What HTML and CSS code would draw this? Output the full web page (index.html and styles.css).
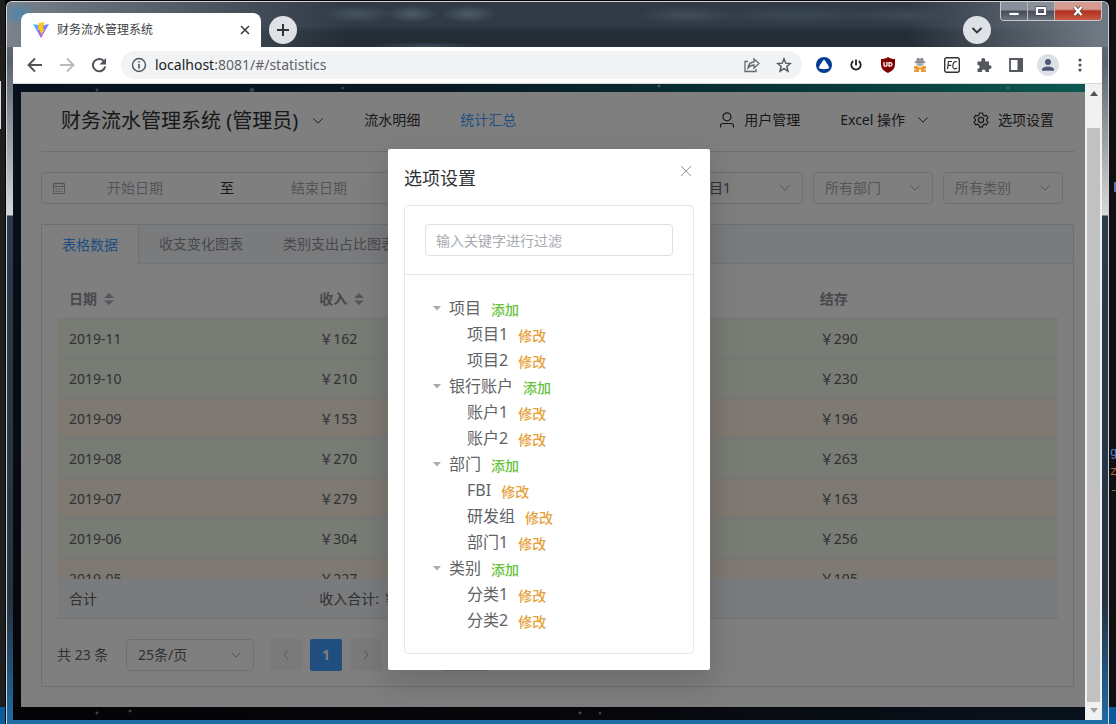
FILE: index.html
```html
<!DOCTYPE html>
<html lang="zh-CN">
<head>
<meta charset="utf-8">
<title>财务流水管理系统</title>
<link rel="stylesheet" href="styles.css">
</head>
<body>
<svg class="defs" aria-hidden="true">
  <symbol id="down" viewBox="0 0 12 12"><path d="M1.500 3.500 6 8.200l4.500-4.700" fill="none" stroke="currentColor"/></symbol>
  <symbol id="left" viewBox="0 0 12 12"><path d="M8 1.800 4 6l4 4.200" fill="none" stroke="currentColor"/></symbol>
  <symbol id="right" viewBox="0 0 12 12"><path d="M4 1.800 8 6l-4 4.200" fill="none" stroke="currentColor"/></symbol>
  <symbol id="sort" viewBox="0 0 10 12"><path d="M0 5 5 0l5 5zM0 7.500h10l-5 4.500z" fill="#a8abb2"/></symbol>
  <symbol id="caret" viewBox="0 0 12 12"><path d="M2 4h8L6 8.500z" fill="#a8abb2"/></symbol>
</svg>
<aside class="desk desk-left" aria-hidden="true"><i></i></aside>
<div class="window">
  <header class="titlebar">
    <div class="tab">
      <svg width="16" height="16" viewBox="0 0 16 16"><defs><linearGradient id="v" x2=".7" y2="1"><stop stop-color="#41c8ff"/><stop offset="1" stop-color="#bd34fe"/></linearGradient></defs><path d="M0 2 8 16 16 2 8.500 3.500z" fill="url(#v)"/><path d="M11.500 0 5.500 1.200 5 8l2.300-.4-.6 3.200 1.600-.4-.8 3.900 4.500-7.300-2.200.3z" fill="#ffc61c"/></svg>
      <span>财务流水管理系统</span>
      <button class="plain" aria-label="关闭标签页"><svg width="10" height="10" viewBox="0 0 10 10"><path d="m1 1 8 8M9 1 1 9" stroke="#3c4043" stroke-width="1.600"/></svg></button>
    </div>
    <button class="circle" aria-label="新标签页"><svg width="14" height="14" viewBox="0 0 14 14"><path d="M7 1v12M1 7h12" stroke="#303236" stroke-width="2"/></svg></button>
    <button class="circle more" aria-label="搜索标签页"><svg width="12" height="12" viewBox="0 0 12 12"><path d="m1.500 4 4.500 4.500L10.500 4" fill="none" stroke="#303236" stroke-width="1.800"/></svg></button>
    <div class="caption">
      <button aria-label="最小化"><svg width="12" height="12" viewBox="0 0 12 12"><path d="M1 7.500h10v3H1z" fill="#fff" stroke="#445" stroke-width=".7"/></svg></button>
      <button aria-label="最大化"><svg width="12" height="12" viewBox="0 0 12 12"><path d="M2 3h8v6H2z" fill="none" stroke="#445" stroke-width="3.400"/><path d="M2 3h8v6H2z" fill="none" stroke="#fff" stroke-width="2.200"/></svg></button>
      <button class="close" aria-label="关闭"><svg width="12" height="12" viewBox="0 0 12 12"><path d="m2.500 2 7 8m0-8-7 8" stroke="#544" stroke-width="4"/><path d="m2.500 2 7 8m0-8-7 8" stroke="#fff" stroke-width="2.500"/></svg></button>
    </div>
  </header>
  <main class="client">
    <nav class="toolbar">
      <button class="tool" aria-label="后退"><svg width="16" height="16" viewBox="0 0 16 16"><path d="M15 8H2M8 1.500 1.500 8 8 14.500" fill="none" stroke="#50545a" stroke-width="1.900"/></svg></button>
      <button class="tool" aria-label="前进"><svg width="16" height="16" viewBox="0 0 16 16"><path d="M1 8h13M8 1.500 14.500 8 8 14.500" fill="none" stroke="#b8babd" stroke-width="1.900"/></svg></button>
      <button class="tool" aria-label="刷新"><svg width="16" height="16" viewBox="0 0 16 16"><path d="M13.200 4.500A6.200 6.200 0 1 0 14.200 9.500" fill="none" stroke="#50545a" stroke-width="2"/><path d="M15 1v6.500H8.500z" fill="#50545a"/></svg></button>
      <div class="address">
        <svg width="16" height="16" viewBox="0 0 16 16"><circle cx="8" cy="8" r="6.500" fill="none" stroke="#50545a" stroke-width="1.400"/><path d="M8 7v4.500M8 4.200v1.600" stroke="#50545a" stroke-width="1.600"/></svg>
        <span class="url"><b>localhost</b>:8081/#/statistics</span>
        <button class="tool" aria-label="分享"><svg width="18" height="16" viewBox="0 0 18 16"><path d="M5 4.500H2v10h11V12" fill="none" stroke="#666a70" stroke-width="1.300"/><path d="M5 11c.4-4 2.500-5.800 6-6V2l5 4.500L11 11V8C8.500 8 6.500 9 5 11z" fill="none" stroke="#666a70" stroke-width="1.300"/></svg></button>
        <button class="tool" aria-label="收藏"><svg width="16" height="16" viewBox="0 0 16 16"><path d="m8 1.800 1.700 4.400 4.700.3-3.600 3 1.200 4.600L8 11.600l-4 2.500 1.200-4.600-3.600-3 4.700-.3z" fill="none" stroke="#50545a" stroke-width="1.400"/></svg></button>
      </div>
      <button class="tool" aria-label="扩展一"><svg width="16" height="16" viewBox="0 0 16 16"><circle cx="8" cy="8" r="8" fill="#023b94"/><path d="M8 2.500C9.500 4 12.500 8.500 13.300 11c-3 1.600-7.600 1.600-10.600 0C3.500 8.500 6.500 4 8 2.500z" fill="#fff"/></svg></button>
      <button class="tool" aria-label="扩展二"><svg width="14" height="14" viewBox="0 0 14 14"><path d="M4.300 3a4.700 4.700 0 1 0 5.400 0M7 1.500v6" fill="none" stroke="#202124" stroke-width="1.800"/></svg></button>
      <button class="tool" aria-label="扩展三"><svg width="16" height="16" viewBox="0 0 16 16"><path d="M8 0c2 1.500 4 2 7 2v5c0 5-3 7-7 9-4-2-7-4-7-9V2c3 0 5-.5 7-2z" fill="#800000"/><path d="M4 5v3.200q0 1 1.300 1h.4q1.300 0 1.300-1V5M9 5.700v3.400h1.500q1.500 0 1.500-1.500T10.500 5.700z" fill="none" stroke="#fff" stroke-width="1.300"/></svg></button>
      <button class="tool" aria-label="扩展四"><svg width="16" height="16" viewBox="0 0 16 16"><path d="M5 1h2l1 .7L9 1h2l1 3.500h1.500V6h-11V4.500H4z" fill="#8d9094"/><path d="M4.500 6h7v2L8 9.500 4.500 8z" fill="#a8aaad"/><path d="M2 9h3.500L8 11l2.500-2H14v3l-2 .5 2 1V15H9v-2.500H7V15H2v-1.500l2-1L2 12z" fill="#ed9b32"/></svg></button>
      <button class="tool" aria-label="扩展五"><svg width="18" height="18" viewBox="0 0 18 18"><rect x="1.700" y="1.700" width="14.600" height="14.600" rx="2" fill="#fff" stroke="#333" stroke-width="1.400"/><path d="M4.500 13 5.500 5.500H9M5 9.300h3.200M13.800 6C11.500 4.500 9.800 7 9.800 10s2 3.700 4.200 2" fill="none" stroke="#333" stroke-width="1.200"/></svg></button>
      <button class="tool" aria-label="扩展程序"><svg width="16" height="16" viewBox="0 0 16 16"><path d="M1.500 4.500h3.800V3a2 2 0 0 1 4 0v1.500H13v3.700h.7a1.900 1.900 0 0 1 0 3.800H13V15H9.500v-.8a1.800 1.800 0 0 0-3.600 0v.8H1.500v-3.300h.7a1.900 1.900 0 0 0 0-3.700h-.7z" fill="#55595f"/></svg></button>
      <button class="tool" aria-label="侧边栏"><svg width="14" height="14" viewBox="0 0 14 14"><path d="M1 1h12v12H1z" fill="#fff" stroke="#55595f" stroke-width="1.800"/><path d="M8.500 0H14v14H8.500z" fill="#55595f"/></svg></button>
      <button class="tool" aria-label="用户"><svg width="22" height="22" viewBox="0 0 22 22"><circle cx="11" cy="11" r="11" fill="#dee1e6"/><circle cx="11" cy="8" r="3" fill="#4d5778"/><path d="M5 16.800V15q1-2.600 6-2.600t6 2.600v1.800z" fill="#4d5778"/></svg></button>
      <button class="tool" aria-label="菜单"><svg width="4" height="14" viewBox="0 0 4 14"><circle cx="2" cy="2" r="1.600" fill="#50545a"/><circle cx="2" cy="7" r="1.600" fill="#50545a"/><circle cx="2" cy="12" r="1.600" fill="#50545a"/></svg></button>
    </nav>
    <div class="browser-body">
      <div class="viewport">
        <div class="page">
          <header class="menu">
            <a href="#" class="brand">财务流水管理系统 (管理员) <svg width="12" height="12"><use href="#down"/></svg></a>
            <a href="#">流水明细</a>
            <a href="#" class="active">统计汇总</a>
            <a href="#" class="push"><svg width="16" height="16" viewBox="0 0 16 16"><circle cx="8" cy="4.800" r="4" fill="none" stroke="currentColor" stroke-width="1.200"/><path d="M1.500 15.500v-1.500q0-2.500 2.500-2.500h8q2.500 0 2.500 2.500v1.500" fill="none" stroke="currentColor" stroke-width="1.200"/></svg>用户管理</a>
            <a href="#" class="excel">Excel 操作<svg width="12" height="12"><use href="#down"/></svg></a>
            <a href="#"><svg width="16" height="16" viewBox="0 0 16 16"><path d="M6.500 1h3l.6 2.100 1.300.8 2.100-.6 1.500 2.600L13.500 7.400v1.300l1.500 1.500-1.500 2.600-2.100-.6-1.300.8-.6 2.100h-3L5.900 13l-1.300-.8-2.100.6L1 10.200l1.500-1.500V7.400L1 5.900l1.500-2.600 2.100.6 1.300-.8z" fill="none" stroke="currentColor" stroke-width="1.200" stroke-linejoin="round"/><circle cx="8" cy="8" r="2.600" fill="none" stroke="currentColor" stroke-width="1.200"/></svg>选项设置</a>
          </header>
          <form class="filters">
            <div class="range field">
              <svg width="14" height="14" viewBox="0 0 14 14"><path d="M1.500 2.500h11v10h-11zM1.500 5.500h11M4 1v3M10 1v3" fill="none" stroke="#a8abb2"/><path d="M3.500 8h7M3.500 10.500h7" stroke="#a8abb2" stroke-dasharray="2 1"/></svg>
              <input aria-label="开始日期" placeholder="开始日期"><span>至</span><input aria-label="结束日期" placeholder="结束日期">
            </div>
            <div class="field select chosen"><select aria-label="项目"><option>项目1</option></select><svg width="12" height="12"><use href="#down"/></svg></div>
            <div class="field select"><select aria-label="部门"><option>所有部门</option></select><svg width="12" height="12"><use href="#down"/></svg></div>
            <div class="field select"><select aria-label="类别"><option>所有类别</option></select><svg width="12" height="12"><use href="#down"/></svg></div>
          </form>
          <section class="card">
            <div class="tabs"><button class="on">表格数据</button><button>收支变化图表</button><button>类别支出占比图表</button></div>
            <div class="pane">
              <div class="scroller">
                <table>
                  <thead><tr><th>日期 <svg width="10" height="12"><use href="#sort"/></svg></th><th>收入 <svg width="10" height="12"><use href="#sort"/></svg></th><th></th><th>结存</th></tr></thead>
                  <tbody>
                    <tr><td>2019-11</td><td>￥162</td><td></td><td>￥290</td></tr>
                    <tr><td>2019-10</td><td>￥210</td><td></td><td>￥230</td></tr>
                    <tr class="warn"><td>2019-09</td><td>￥153</td><td></td><td>￥196</td></tr>
                    <tr><td>2019-08</td><td>￥270</td><td></td><td>￥263</td></tr>
                    <tr class="warn"><td>2019-07</td><td>￥279</td><td></td><td>￥163</td></tr>
                    <tr><td>2019-06</td><td>￥304</td><td></td><td>￥256</td></tr>
                    <tr class="warn"><td>2019-05</td><td>￥227</td><td></td><td>￥105</td></tr>
                  </tbody>
                </table>
              </div>
              <table class="total"><tbody><tr><td>合计</td><td>收入合计: ￥</td><td></td><td></td></tr></tbody></table>
              <div class="pager">
                <span>共 23 条</span>
                <div class="field select size"><select aria-label="每页条数"><option>25条/页</option></select><svg width="12" height="12"><use href="#down"/></svg></div>
                <div class="pages">
                  <button aria-label="上一页"><svg width="12" height="12"><use href="#left"/></svg></button>
                  <button class="current">1</button>
                  <button aria-label="下一页"><svg width="12" height="12"><use href="#right"/></svg></button>
                </div>
                <input class="field jump" aria-label="页码">
              </div>
            </div>
          </section>
        </div>
        <div class="overlay">
          <section class="dialog" role="dialog" aria-labelledby="dialog-title">
            <header><h2 id="dialog-title">选项设置</h2><button class="plain" aria-label="关闭"><svg width="12" height="12" viewBox="0 0 12 12"><path d="m1 1 10 10M11 1 1 11" stroke="#909399"/></svg></button></header>
            <div class="box">
              <div class="search"><input class="field" aria-label="过滤" placeholder="输入关键字进行过滤"></div>
              <ul class="tree">
                <li><div><svg width="12" height="12"><use href="#caret"/></svg>项目<a href="#" class="add">添加</a></div>
                  <ul><li><div>项目1<a href="#">修改</a></div></li><li><div>项目2<a href="#">修改</a></div></li></ul></li>
                <li><div><svg width="12" height="12"><use href="#caret"/></svg>银行账户<a href="#" class="add">添加</a></div>
                  <ul><li><div>账户1<a href="#">修改</a></div></li><li><div>账户2<a href="#">修改</a></div></li></ul></li>
                <li><div><svg width="12" height="12"><use href="#caret"/></svg>部门<a href="#" class="add">添加</a></div>
                  <ul><li><div>FBI<a href="#">修改</a></div></li><li><div>研发组<a href="#">修改</a></div></li><li><div>部门1<a href="#">修改</a></div></li></ul></li>
                <li><div><svg width="12" height="12"><use href="#caret"/></svg>类别<a href="#" class="add">添加</a></div>
                  <ul><li><div>分类1<a href="#">修改</a></div></li><li><div>分类2<a href="#">修改</a></div></li></ul></li>
              </ul>
            </div>
          </section>
        </div>
      </div>
      <div class="scrollbar" aria-hidden="true"><svg width="8" height="5" viewBox="0 0 8 5"><path d="M0 5 4 0l4 5z" fill="#505050"/></svg><i></i><svg width="8" height="5" viewBox="0 0 8 5"><path d="M0 0h8L4 5z" fill="#a3a3a3"/></svg></div>
    </div>
  </main>
</div>
<aside class="desk desk-right" aria-hidden="true"><i></i><span>g</span><span class="warm">z</span><span class="warm">-</span></aside>
</body>
</html>
```
FILE: styles.css
```css
* { box-sizing: border-box; }
body {
  margin: 0; height: 100vh; display: flex; overflow: hidden; background: #050508;
  font: 14px/20px "Noto Sans", "Noto Sans CJK SC", sans-serif; color: #606266;
}
button, input, select { font: inherit; color: inherit; border: 0; padding: 0; margin: 0; background: none; }
svg { flex: none; display: block; }
a { color: inherit; text-decoration: none; }
.defs { position: absolute; width: 0; height: 0; }
.plain { display: flex; }

.desk { background: linear-gradient(#1f1f20, #1f1f20) 0 0 / 100% calc(100% - 17px) no-repeat #0a5c9c; }
.desk-left { width: 5px; padding-top: 81px; }
.desk-left i { display: block; width: 1px; height: 48px; background: #ddd; }
.desk-right { width: 7px; padding: 182px 0 0 1px; overflow: hidden; background-image: linear-gradient(#101012, #101012); font: 12px/19px "Liberation Mono", monospace; }
.desk-right i { display: block; width: 2px; height: 10px; margin: 0 0 252px 4px; background: #5a70b8; }
.desk-right span { display: block; color: #5a86c8; }
.desk-right .warm { color: #a86c3c; }

.window {
  flex: 1; min-width: 0; display: flex; flex-direction: column; margin: 1px 0 0 1px; padding: 0 6px 4px;
  border: solid #cfd3da; border-width: 1px 1px 0; border-radius: 6px 6px 0 0;
  background:
    linear-gradient(#1e6ba5, #1e6ba5) bottom / 100% 4px no-repeat,
    linear-gradient(#6b737e, #59636e 60px, #8c9298 120px, #d8d8d8 213px, #2b3a49 214px, #26323f 600px, #1e6ba5 720px);
}
.titlebar {
  display: flex; align-items: flex-start; height: 45px; margin: 0 -6px; padding: 0 6px 0 14px;
  border-radius: 5px 5px 0 0;
  background:
    radial-gradient(ellipse 18px 12px at 12px 12px, #4f87a9, transparent),
    radial-gradient(ellipse 36px 9px at 350px 12px, #465462, transparent),
    radial-gradient(ellipse 26px 9px at 405px 12px, #4d5b69, transparent),
    radial-gradient(ellipse 28px 9px at 462px 12px, #4d5b69, transparent),
    radial-gradient(ellipse 50px 9px at 680px 13px, #414e5b, transparent),
    radial-gradient(ellipse 90px 9px at 790px 13px, #3b4855, transparent),
    radial-gradient(ellipse 60px 9px at 900px 13px, #3d4a57, transparent),
    radial-gradient(ellipse 60px 4px at 420px 44px, #3b4955, transparent),
    linear-gradient(90deg, #7b828c, #65707b 70px, transparent 340px, transparent 900px, #6f7782 1090px),
    linear-gradient(#303a46 24px, #242d36 30px);
}
.tab {
  display: flex; align-items: center; gap: 8px; width: 240px; height: 34px; margin-top: 11px; padding: 0 11px 0 12px;
  border-radius: 8px 8px 0 0; background: #fff; color: #3c4043; font-size: 12px;
}
.tab span { flex: 1; }
.circle { display: grid; place-items: center; width: 28px; height: 28px; margin: 14px 0 0 8px; border-radius: 50%; background: #dee1e6; }
.more { margin: 14px 9px 0 auto; }
.caption { display: flex; height: 19px; border: solid #c4c7cc; border-width: 0 1px 1px; border-radius: 0 0 4px 4px; overflow: hidden; }
.caption button { display: grid; place-items: center; width: 27px; background: linear-gradient(#8a9099 45%, #454c57 50%, #6b727c); border-right: 1px solid #b5b9bf; }
.caption .close { width: 46px; border: 0; background: linear-gradient(#d59a90 40%, #b4301e 50%, #c65a43); }

.client { flex: 1; min-height: 0; display: flex; flex-direction: column; }
.toolbar { display: flex; align-items: center; height: 37px; padding: 0 6px; background: #fff; border-bottom: 1px solid #d5d7da; }
.tool { display: grid; place-items: center; width: 32px; height: 28px; }
.address { flex: 1; display: flex; align-items: center; height: 28px; margin: 0 6px; padding: 0 2px 0 10px; border-radius: 14px; background: #f1f3f4; }
.url { flex: 1; margin-left: 8px; color: #5f6368; }
.url b { font-weight: 400; color: #202124; }

.browser-body { flex: 1; min-height: 0; display: flex; }
.viewport {
  flex: 1; min-width: 0; position: relative; overflow: hidden; padding: 8px 0 13px 8px;
  background:
    radial-gradient(circle at 84px 6px, #abc, transparent 2px),
    radial-gradient(circle at 239px 6px, #7ec4c8, transparent 3px),
    radial-gradient(circle at 330px 4px, #aac, transparent 2px),
    radial-gradient(circle at 646px 2px, #bdd, transparent 2px),
    radial-gradient(circle at 995px 4px, #bdd, transparent 2px),
    radial-gradient(circle at 84px 629px, #bbb, transparent 2px),
    radial-gradient(circle at 117px 627px, #bbb, transparent 2px),
    radial-gradient(circle at 567px 629px, #ccc, transparent 2px),
    radial-gradient(circle at 587px 629px, #ccc, transparent 2px),
    linear-gradient(90deg, #0e2440, #10324a 40%, #107070 75%, #18b0a4) top / 100% 8px no-repeat,
    linear-gradient(90deg, #08060c, #101018 55%, #122438) bottom / 100% 13px no-repeat,
    linear-gradient(#12243a, #0c0c14);
}
.page { padding: 0 11px 20px 20px; background: #fff; }
.menu { display: flex; height: 60px; border-bottom: 1px solid #dcdfe6; color: #303133; }
.menu a { display: flex; align-items: center; gap: 9px; padding: 0 20px 4px; }
.menu .brand { gap: 14px; padding-bottom: 2px; font-size: 20px; }
.menu .active { color: #409eff; }
.menu .push { margin-left: auto; }
.menu .excel { gap: 12px; padding-right: 24px; }

.field { height: 32px; border: 1px solid #dcdfe6; border-radius: 4px; background: #fff; }
.filters { display: flex; gap: 10px; padding: 20px 11px 20px 0; }
.range { display: flex; align-items: center; width: 358px; max-width: 50%; padding: 0 10px; margin-right: auto; color: #303133; }
.range input { flex: 1; min-width: 0; text-align: center; }
.range span { width: 46px; text-align: center; }
::placeholder { color: #a8abb2; opacity: 1; }
.select { display: flex; align-items: center; width: 120px; padding: 0 11px; color: #a8abb2; }
.select select { flex: 1; min-width: 0; appearance: none; outline: 0; }
.chosen, .size { color: #606266; }
.select svg { color: #a8abb2; }

.card { border: 1px solid #dcdfe6; }
.tabs { display: flex; height: 39px; background: #f5f7fa; border-bottom: 1px solid #e4e7ed; }
.tabs button { padding: 0 20px; color: #909399; }
.tabs .on { height: 39px; background: #fff; color: #409eff; border-right: 1px solid #dcdfe6; }
.pane { padding: 16px 15px 15px; }
.scroller { height: 299px; overflow: hidden; }
table { width: 100%; table-layout: fixed; border-collapse: separate; border-spacing: 0; }
th, td { height: 40px; padding: 0 12px; text-align: left; border-bottom: 1px solid #e8ebf5; }
th { height: 39px; color: #909399; }
th svg { display: inline-block; vertical-align: -1px; margin-left: 3px; }
td { background: #f0f9eb; }
.warn td { background: #fdf3e4; }
.total td { background: #f5f7fa; white-space: nowrap; }
.pager { display: flex; align-items: center; gap: 16px; margin-top: 20px; }
.pager span { min-width: 53px; }
.size { width: 128px; }
.pages { display: flex; gap: 8px; }
.pages button { display: grid; place-items: center; width: 32px; height: 32px; border-radius: 2px; background: #f4f4f5; color: #a8abb2; }
.pages .current { background: #409eff; color: #fff; font-weight: 700; }
.jump { width: 50px; margin-left: 42px; }

.overlay { position: absolute; inset: 0; background: rgba(0, 0, 0, .5); }
.dialog { width: 322px; margin: 65px auto 0; padding: 0 16px 16px; border-radius: 2px; background: #fff; box-shadow: 0 12px 32px 4px rgba(0, 0, 0, .14); }
.dialog header { display: flex; justify-content: space-between; height: 56px; padding: 16px 2px 0 0; }
.dialog h2 { margin: 0; font-size: 18px; line-height: 26px; font-weight: 400; color: #303133; }
.dialog header button { height: 12px; }
.box { border: 1px solid #e4e7ed; border-radius: 4px; }
.search { padding: 18px 20px; border-bottom: 1px solid #e4e7ed; }
.search input { display: block; width: 100%; padding: 0 10px; }
.tree { margin: 0; padding: 20px; font-size: 16px; list-style: none; }
.tree ul { margin: 0; padding: 0 0 0 42px; list-style: none; }
.tree div { display: flex; align-items: center; height: 26px; line-height: 26px; }
.tree svg { margin: 0 6px; }
.tree a { margin-left: 10px; padding-top: 3px; font-size: 14px; font-weight: 500; color: #e6a23c; }
.tree .add { color: #67c23a; }

.scrollbar { display: flex; flex-direction: column; align-items: center; width: 17px; padding: 7px 2px; background: #f1f1f1; }
.scrollbar i { flex: 1; width: 13px; margin: 32px 0 6px; background: #c1c1c1; }
```
